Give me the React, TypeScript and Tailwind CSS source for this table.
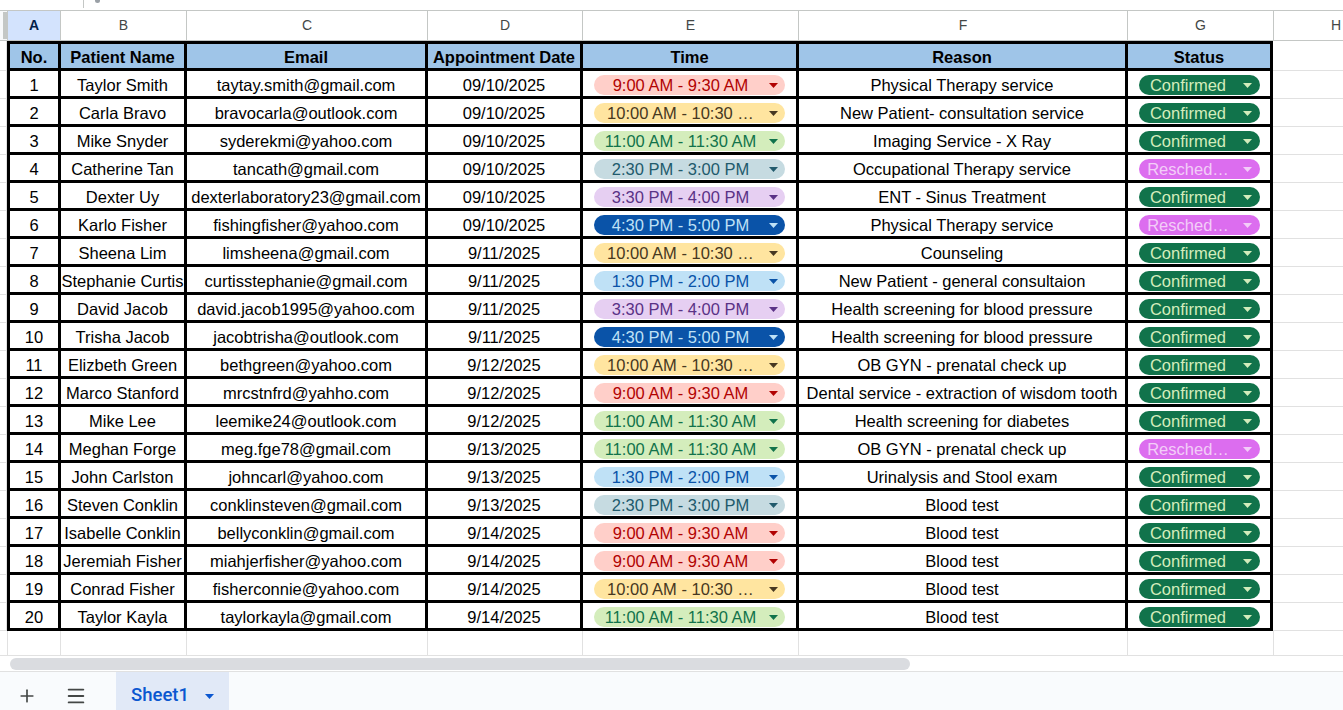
import { Plus, Menu } from "lucide-react";

type Row = {
  name: string;
  email: string;
  date: string;
  time: string;
  tone: keyof typeof chipTones;
  reason: string;
  confirmed: boolean;
};

const chipTones = {
  red: "bg-[#ffcfc9] text-[#b10202]",
  yellow: "bg-[#ffe5a0] text-[#473821]",
  green: "bg-[#d4edbc] text-[#11734b]",
  gray: "bg-[#c6dbe1] text-[#215a6c]",
  purple: "bg-[#e6cff2] text-[#5a3286]",
  navy: "bg-[#0a53a8] text-[#bfe1f6]",
  sky: "bg-[#bfe1f6] text-[#0a53a8]",
};

const rows: Row[] = [
  { name: "Taylor Smith", email: "taytay.smith@gmail.com", date: "09/10/2025", time: "9:00 AM - 9:30 AM", tone: "red", reason: "Physical Therapy service", confirmed: true },
  { name: "Carla Bravo", email: "bravocarla@outlook.com", date: "09/10/2025", time: "10:00 AM - 10:30 …", tone: "yellow", reason: "New Patient- consultation service", confirmed: true },
  { name: "Mike Snyder", email: "syderekmi@yahoo.com", date: "09/10/2025", time: "11:00 AM - 11:30 AM", tone: "green", reason: "Imaging Service - X Ray", confirmed: true },
  { name: "Catherine Tan", email: "tancath@gmail.com", date: "09/10/2025", time: "2:30 PM - 3:00 PM", tone: "gray", reason: "Occupational Therapy service", confirmed: false },
  { name: "Dexter Uy", email: "dexterlaboratory23@gmail.com", date: "09/10/2025", time: "3:30 PM - 4:00 PM", tone: "purple", reason: "ENT - Sinus Treatment", confirmed: true },
  { name: "Karlo Fisher", email: "fishingfisher@yahoo.com", date: "09/10/2025", time: "4:30 PM - 5:00 PM", tone: "navy", reason: "Physical Therapy service", confirmed: false },
  { name: "Sheena Lim", email: "limsheena@gmail.com", date: "9/11/2025", time: "10:00 AM - 10:30 …", tone: "yellow", reason: "Counseling", confirmed: true },
  { name: "Stephanie Curtis", email: "curtisstephanie@gmail.com", date: "9/11/2025", time: "1:30 PM - 2:00 PM", tone: "sky", reason: "New Patient - general consultaion", confirmed: true },
  { name: "David Jacob", email: "david.jacob1995@yahoo.com", date: "9/11/2025", time: "3:30 PM - 4:00 PM", tone: "purple", reason: "Health screening for blood pressure", confirmed: true },
  { name: "Trisha Jacob", email: "jacobtrisha@outlook.com", date: "9/11/2025", time: "4:30 PM - 5:00 PM", tone: "navy", reason: "Health screening for blood pressure", confirmed: true },
  { name: "Elizbeth Green", email: "bethgreen@yahoo.com", date: "9/12/2025", time: "10:00 AM - 10:30 …", tone: "yellow", reason: "OB GYN - prenatal check up", confirmed: true },
  { name: "Marco Stanford", email: "mrcstnfrd@yahho.com", date: "9/12/2025", time: "9:00 AM - 9:30 AM", tone: "red", reason: "Dental service - extraction of wisdom tooth", confirmed: true },
  { name: "Mike Lee", email: "leemike24@outlook.com", date: "9/12/2025", time: "11:00 AM - 11:30 AM", tone: "green", reason: "Health screening for diabetes", confirmed: true },
  { name: "Meghan Forge", email: "meg.fge78@gmail.com", date: "9/13/2025", time: "11:00 AM - 11:30 AM", tone: "green", reason: "OB GYN - prenatal check up", confirmed: false },
  { name: "John Carlston", email: "johncarl@yahoo.com", date: "9/13/2025", time: "1:30 PM - 2:00 PM", tone: "sky", reason: "Urinalysis and Stool exam", confirmed: true },
  { name: "Steven Conklin", email: "conklinsteven@gmail.com", date: "9/13/2025", time: "2:30 PM - 3:00 PM", tone: "gray", reason: "Blood test", confirmed: true },
  { name: "Isabelle Conklin", email: "bellyconklin@gmail.com", date: "9/14/2025", time: "9:00 AM - 9:30 AM", tone: "red", reason: "Blood test", confirmed: true },
  { name: "Jeremiah Fisher", email: "miahjerfisher@yahoo.com", date: "9/14/2025", time: "9:00 AM - 9:30 AM", tone: "red", reason: "Blood test", confirmed: true },
  { name: "Conrad Fisher", email: "fisherconnie@yahoo.com", date: "9/14/2025", time: "10:00 AM - 10:30 …", tone: "yellow", reason: "Blood test", confirmed: true },
  { name: "Taylor Kayla", email: "taylorkayla@gmail.com", date: "9/14/2025", time: "11:00 AM - 11:30 AM", tone: "green", reason: "Blood test", confirmed: true },
];

// widths of the bordered data cells (A has the left edge border too)
const dataCols = ["w-[54px] border-l-[3px]", "w-[126px]", "w-[241px]", "w-[155px]", "w-[216px]", "w-[329px]", "w-[145px]"];
// widths of the grey grid columns (column letters, empty row)
const gridCols = ["w-[53px]", "w-[126px]", "w-[241px]", "w-[155px]", "w-[216px]", "w-[329px]", "w-[146px]"];
const letters = ["A", "B", "C", "D", "E", "F", "G"];

const Caret = ({ className }: { className: string }) => (
  <svg width="9" height="5" viewBox="0 0 9 5" className={className}>
    <polygon points="0,0 9,0 4.5,5" fill="currentColor" />
  </svg>
);

const Cell = ({ i, children, head }: { i: number; children: React.ReactNode; head?: boolean }) => (
  <div
    className={`${dataCols[i]} shrink-0 h-full border-r-[3px] border-b-[3px] border-black ${head ? "border-t-[3px] bg-[#9fc5e8] font-bold pt-[2px]" : "pt-[3px]"} flex items-center justify-center overflow-hidden whitespace-nowrap`}
  >
    {children}
  </div>
);

export default function App() {
  return (
    <div className="w-[1343px] h-[710px] overflow-hidden bg-white text-black flex flex-col font-['Liberation_Sans',Arial,sans-serif] text-[16.5px]">
      {/* formula bar remnant */}
      <div className="h-[11px] shrink-0 border-b border-[#c4c7c5] relative">
        <div className="absolute left-[83px] top-0 w-px h-[8px] bg-[#c4c7c5]" />
        <div className="absolute left-[95px] -top-[2px] w-[5px] h-[5px] rounded-full bg-[#9aa0a6]" />
      </div>

      {/* column letters */}
      <div className="h-[30px] shrink-0 flex border-b border-[#c4c7c5] text-[14px] text-[#444746]">
        <div className="w-[8px] shrink-0 border-r border-[#c4c7c5] bg-[#f8f9fa] flex pl-[3px] py-[1px]">
          <div className="w-[4px] h-full bg-[#c4c7c5]" />
        </div>
        {letters.map((l, i) => (
          <div
            key={l}
            className={`${gridCols[i]} shrink-0 border-r border-[#c4c7c5] flex items-center justify-center ${i === 0 ? "bg-[#d3e3fd] font-bold text-[#041e49]" : ""}`}
          >
            {l}
          </div>
        ))}
        <div className="w-[124px] shrink-0 flex items-center justify-center">H</div>
      </div>

      {/* header row */}
      <div className="h-[30px] shrink-0 flex">
        <div className="w-[7px] shrink-0 border-r border-b border-[#e1e1e1]" />
        {["No.", "Patient Name", "Email", "Appointment Date", "Time", "Reason", "Status"].map((h, i) => (
          <Cell key={h} i={i} head>
            {h}
          </Cell>
        ))}
        <div className="flex-1 border-b border-[#e1e1e1]" />
      </div>

      {/* data rows */}
      {rows.map((r, n) => (
        <div key={n} className="h-[28px] shrink-0 flex">
          <div className="w-[7px] shrink-0 border-r border-b border-[#e1e1e1]" />
          <Cell i={0}>{n + 1}</Cell>
          <Cell i={1}>{r.name}</Cell>
          <Cell i={2}>{r.email}</Cell>
          <Cell i={3}>{r.date}</Cell>
          <Cell i={4}>
            <div className={`w-[191px] h-[20px] rounded-full flex items-center pl-[8px] ${chipTones[r.tone]}`}>
              <span className="flex-1 text-center whitespace-nowrap leading-none">{r.time}</span>
              <Caret className="ml-[10px] mr-[7px] shrink-0" />
            </div>
          </Cell>
          <Cell i={5}>{r.reason}</Cell>
          <Cell i={6}>
            <div
              className={`w-[121px] h-[20px] rounded-full flex items-center pl-[8px] ${r.confirmed ? "bg-[#11734b] text-[#d4edbc]" : "bg-[#dc6def] text-[#f3cdf8]"}`}
            >
              <span className="flex-1 text-center whitespace-nowrap leading-none">{r.confirmed ? "Confirmed" : "Resched…"}</span>
              <Caret className="ml-[13px] mr-[8px] shrink-0" />
            </div>
          </Cell>
          <div className="flex-1 border-b border-[#e1e1e1]" />
        </div>
      ))}

      {/* empty row */}
      <div className="h-[25px] shrink-0 flex border-b border-[#e1e1e1]">
        <div className="w-[8px] shrink-0 border-r border-[#e1e1e1]" />
        {gridCols.map((w, i) => (
          <div key={i} className={`${w} shrink-0 border-r border-[#e1e1e1]`} />
        ))}
        <div className="flex-1" />
      </div>

      {/* horizontal scrollbar */}
      <div className="h-[16px] shrink-0 flex items-center pl-[10px] border-b border-[#e1e1e1]">
        <div className="w-[900px] h-[12px] rounded-full bg-[#dadce0]" />
      </div>

      {/* sheet tabs (taller than the viewport, cut off at the bottom) */}
      <div className="h-[48px] shrink-0 flex items-stretch bg-[#f9fbfd] text-[#444746]">
        <div className="w-[54px] flex items-center justify-center">
          <Plus size={20} strokeWidth={2} />
        </div>
        <div className="w-[44px] flex items-center justify-center">
          <Menu size={22} strokeWidth={2} />
        </div>
        <div className="ml-[18px] w-[113px] bg-[#e1e9f7] flex items-center pl-[15px] text-[#0b57d0] font-['Roboto',sans-serif] font-medium text-[18.5px]">
          <span>Sheet1</span>
          <Caret className="ml-[16px]" />
        </div>
      </div>
    </div>
  );
}
